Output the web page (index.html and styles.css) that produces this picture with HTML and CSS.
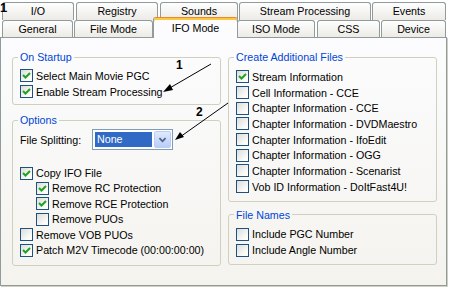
FILE: index.html
```html
<!DOCTYPE html>
<html lang="en">
<head>
    <meta charset="UTF-8">
    <title>IFO Mode Settings</title>
    <link rel="stylesheet" href="styles.css">
</head>
<body>
    <div class="window">
        <div class="tab-row back">
            <div class="tab t-io">I/O</div>
            <div class="tab t-registry">Registry</div>
            <div class="tab t-sounds">Sounds</div>
            <div class="tab t-stream">Stream Processing</div>
            <div class="tab t-events">Events</div>
        </div>
        <div class="tab-row front">
            <div class="tab t-general">General</div>
            <div class="tab t-file">File Mode</div>
            <div class="tab t-ifo selected">IFO Mode</div>
            <div class="tab t-iso">ISO Mode</div>
            <div class="tab t-css">CSS</div>
            <div class="tab t-device">Device</div>
        </div>

        <div class="panel">
            <div class="col">
                <fieldset class="group startup">
                    <legend>On Startup</legend>
                    <div class="rows">
                        <div class="check"><span class="box on"><svg viewBox="0 0 11 11"><polyline points="2,5 4.5,7.5 9,3"/></svg></span>Select Main Movie PGC</div>
                        <div class="check"><span class="box on"><svg viewBox="0 0 11 11"><polyline points="2,5 4.5,7.5 9,3"/></svg></span>Enable Stream Processing</div>
                    </div>
                </fieldset>

                <fieldset class="group options">
                    <legend>Options</legend>
                    <div class="combo-row">
                        <span class="combo-label">File Splitting:</span>
                        <div class="combo">
                            <span class="combo-value">None</span>
                            <span class="combo-btn"><svg viewBox="0 0 17 18"><polyline points="5,7 8.5,10.5 12,7"/></svg></span>
                        </div>
                    </div>
                    <div class="rows">
                        <div class="check"><span class="box on"><svg viewBox="0 0 11 11"><polyline points="2,5 4.5,7.5 9,3"/></svg></span>Copy IFO File</div>
                        <div class="check sub"><span class="box on"><svg viewBox="0 0 11 11"><polyline points="2,5 4.5,7.5 9,3"/></svg></span>Remove RC Protection</div>
                        <div class="check sub"><span class="box on"><svg viewBox="0 0 11 11"><polyline points="2,5 4.5,7.5 9,3"/></svg></span>Remove RCE Protection</div>
                        <div class="check sub"><span class="box"></span>Remove PUOs</div>
                        <div class="check"><span class="box"></span>Remove VOB PUOs</div>
                        <div class="check"><span class="box on"><svg viewBox="0 0 11 11"><polyline points="2,5 4.5,7.5 9,3"/></svg></span>Patch M2V Timecode (00:00:00:00)</div>
                    </div>
                </fieldset>
            </div>

            <div class="col">
                <fieldset class="group create">
                    <legend>Create Additional Files</legend>
                    <div class="rows">
                        <div class="check"><span class="box on"><svg viewBox="0 0 11 11"><polyline points="2,5 4.5,7.5 9,3"/></svg></span>Stream Information</div>
                        <div class="check"><span class="box"></span>Cell Information - CCE</div>
                        <div class="check"><span class="box"></span>Chapter Information - CCE</div>
                        <div class="check"><span class="box"></span>Chapter Information - DVDMaestro</div>
                        <div class="check"><span class="box"></span>Chapter Information - IfoEdit</div>
                        <div class="check"><span class="box"></span>Chapter Information - OGG</div>
                        <div class="check"><span class="box"></span>Chapter Information - Scenarist</div>
                        <div class="check"><span class="box"></span>Vob ID Information - DoItFast4U!</div>
                    </div>
                </fieldset>

                <fieldset class="group names">
                    <legend>File Names</legend>
                    <div class="rows">
                        <div class="check"><span class="box"></span>Include PGC Number</div>
                        <div class="check"><span class="box"></span>Include Angle Number</div>
                    </div>
                </fieldset>
            </div>
        </div>

        <!-- annotations drawn over the dialog -->
        <div class="mark">1</div>
        <svg class="arrows" width="449" height="289" viewBox="0 0 449 289">
            <text x="176" y="69">1</text>
            <line x1="211" y1="64" x2="168" y2="89"/>
            <polygon points="163,92 170,84 173,90"/>
            <text x="196" y="116">2</text>
            <line x1="228" y1="103" x2="180" y2="137"/>
            <polygon points="175,140 180,132 184,137"/>
        </svg>
    </div>
</body>
</html>
```

FILE: styles.css
```css
* { margin: 0; padding: 0; box-sizing: border-box; }
body { background: #fff; font-family: 'Liberation Sans', Arial, sans-serif; font-size: 10.7px; color: #000; }
.window { position: relative; width: 449px; height: 289px; overflow: hidden; }

/* tabs */
.tab-row { display: flex; padding-left: 2px; }
.tab-row.back { padding-top: 2px; height: 20px; }
.tab-row.front { height: 17px; align-items: flex-start; }
.tab { height: 18px; border: 1px solid #919b9c; border-bottom: none; border-radius: 3px 3px 0 0; background: linear-gradient(#fefefe, #ecebe6); text-align: center; line-height: 16px; white-space: nowrap; }
.front .tab { height: 17px; line-height: 16px; }
.front .tab.selected { position: relative; z-index: 1; height: 21px; margin-top: -3px; margin-left: -2px; margin-right: -2px; background: #fcfcfe; border-top: 1px solid #e68b2c; box-shadow: inset 0 2px 0 #ffc83c; padding-top: 2px; line-height: 16px; }

.t-io { width: 72px; margin-right: 2px; }
.t-registry { width: 82px; margin-right: 2px; }
.t-sounds { width: 78px; margin-right: 1px; }
.t-stream { width: 132px; margin-right: 1px; }
.t-events { width: 74px; }
.t-general { width: 71px; margin-right: 1px; }
.t-file { width: 79px; margin-right: 2px; }
.t-ifo { width: 85px; }
.t-iso { width: 78px; margin-left: 1px; margin-right: 2px; }
.t-css { width: 63px; margin-right: 1px; }
.t-device { width: 65px; }

/* page */
.panel { width: 447px; height: 249px; border: 1px solid #919b9c; background: linear-gradient(#fcfcfe, #f4f3ee); box-shadow: 1px 1px 0 #d0d0bf; display: grid; grid-template-columns: 209px 209px; column-gap: 7px; align-items: start; padding: 13px 0 0 11px; }

.group { border: 1px solid #d0d0bf; border-radius: 3px; padding: 0 7px 6px; min-width: 0; }
.group legend { color: #0046d5; line-height: 12px; padding: 0 2px; margin-left: -2px; }
.startup { padding-bottom: 5px; }
.options { margin-top: 9px; padding-bottom: 7px; }
.create { padding-bottom: 6px; }
.names { margin-top: 7px; }

.rows { padding-top: 5px; }
.create .rows { padding-top: 6px; }
.names .rows { padding-top: 6px; }
.options .rows { padding-top: 15px; }
.check { display: flex; align-items: center; height: 15.7px; white-space: nowrap; }
.options .check { height: 15.4px; }
.check.sub { margin-left: 16px; }

.box { width: 13px; height: 13px; flex: none; margin-right: 3px; border: 1px solid #1c5180; background: linear-gradient(135deg, #dcdcd7, #fbfbfa 75%, #fff); display: flex; }
.box svg { width: 11px; height: 11px; }
.box polyline { fill: none; stroke: #21a121; stroke-width: 2; }

/* combo box */
.combo-row { display: flex; align-items: center; padding-top: 3px; }
.combo-label { width: 72px; }
.combo { width: 81px; height: 21px; border: 1px solid #7f9db9; background: #fff; display: flex; padding: 1px 0 1px 1px; }
.combo-value { width: 57px; margin: 1px 2px 1px 1px; background: #316ac5; color: #fff; padding-left: 2px; line-height: 15px; }
.combo-btn { width: 17px; border: 1px solid #bccdf2; border-radius: 2px; background: linear-gradient(#e0e9fd, #b8cdf8); display: flex; }
.combo-btn svg { width: 15px; height: 16px; }
.combo-btn polyline { fill: none; stroke: #4d6185; stroke-width: 2; }

/* annotations */
.mark { position: absolute; left: 0; top: 1px; font-weight: bold; font-size: 13px; line-height: 14px; }
.arrows { position: absolute; left: 0; top: 0; pointer-events: none; }
.arrows line { stroke: #000; stroke-width: 1; }
.arrows polygon { fill: #000; }
.arrows text { font-family: 'Liberation Sans', Arial, sans-serif; font-weight: bold; font-size: 12px; }
```
